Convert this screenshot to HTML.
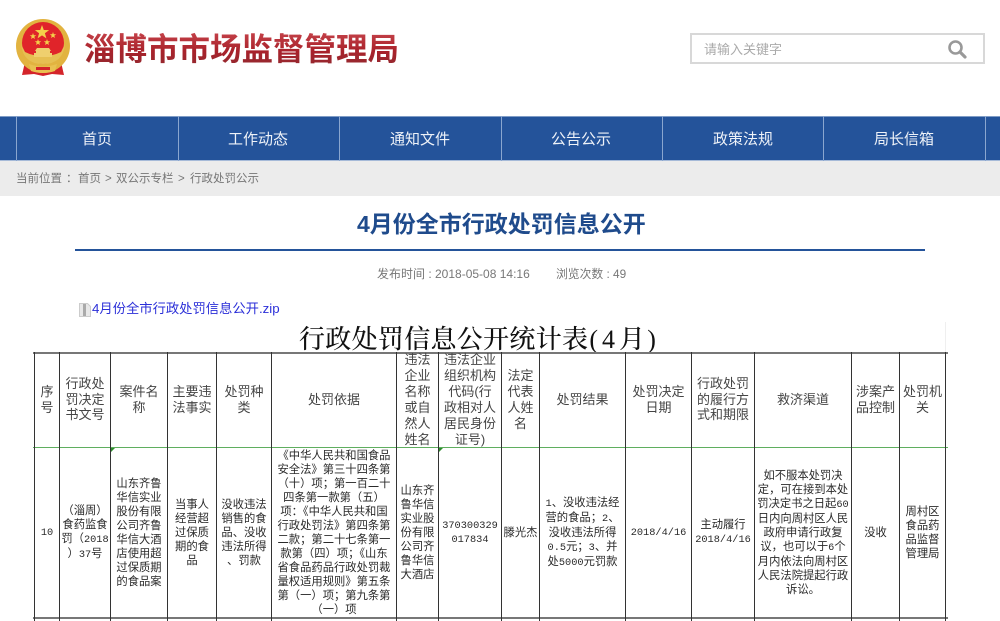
<!DOCTYPE html>
<html lang="zh-CN">
<head>
<meta charset="utf-8">
<title>4月份全市行政处罚信息公开</title>
<style>
html,body{margin:0;padding:0;background:#fff}
body{width:1000px;height:621px;position:relative;overflow:hidden;font-family:"Liberation Sans","Noto Sans CJK SC",sans-serif}
#w{position:absolute;left:0;top:0;width:1000px;height:621px;filter:blur(.3px)}
.a{position:absolute;white-space:nowrap}
.logo{left:84px;top:29px;font-size:31.5px;line-height:40px;font-weight:700;color:#a52a32;background:linear-gradient(#c9474e,#a9222b 55%,#8f2a30);-webkit-background-clip:text;background-clip:text;-webkit-text-fill-color:transparent}
.nav{left:0;top:116px;width:1000px;height:45px;background:#24539a;box-sizing:border-box;border-top:1px solid #7f9cc6;border-bottom:1px solid #a6bad8}
.sep{position:absolute;top:116px;width:1px;height:45px;background:#8aa6cf}
.nt{position:absolute;top:129px;width:160px;text-align:center;color:#eef2f8;font-size:15px;line-height:22px}
.crumb{left:0;top:161px;width:1000px;height:35px;background:#ececec}
.h{position:absolute;background:#555;height:1px}
.v{position:absolute;background:#333;width:1px;top:352px;height:269px}
.c{position:absolute;display:flex;align-items:center;justify-content:center;text-align:center;white-space:nowrap;color:#333}
.th{top:352px;height:95px;font-size:13px;line-height:15.6px;color:#444}
.td{top:448px;height:169px;font-size:11.3px;line-height:14px;color:#2a2a2a}
.n{font-family:"Liberation Mono",monospace;font-size:10.3px}
.tri{position:absolute;top:448px;width:0;height:0;border-top:4px solid #2e8b2e;border-right:4px solid transparent}
.cr{position:absolute;top:171px;font-size:11.5px;line-height:16px;color:#777}
</style>
</head>
<body>
<div id="w">
<svg class="a" style="left:14px;top:17px" width="60" height="62" viewBox="14 17 60 62">
<path d="M25 62 L22 75 L34 74 L43 76 L52 74 L64 75 L61 62Z" fill="#d4242a"/>
<circle cx="43" cy="46" r="27" fill="#e2b340"/>
<circle cx="43" cy="43" r="21" fill="#e0242a"/>
<path d="M21 44 Q23 64 43 64 Q63 64 65 44 L61 52 Q53 56 43 56 Q33 56 25 52Z" fill="#e6bf52"/>
<path d="M42 25l1.8 5 5.3.1-4.2 3.2 1.5 5.1-4.4-3-4.4 3 1.5-5.1-4.2-3.2 5.3-.1z" fill="#f4d04a"/>
<path d="M33 33l.8 2.2 2.4.1-1.9 1.4.7 2.3-2-1.3-2 1.3.7-2.3-1.9-1.4 2.4-.1z" fill="#f4d04a"/>
<path d="M53 32l.8 2.2 2.4.1-1.9 1.4.7 2.3-2-1.3-2 1.3.7-2.3-1.9-1.4 2.4-.1z" fill="#f4d04a"/>
<path d="M38 39l.8 2.2 2.4.1-1.9 1.4.7 2.3-2-1.3-2 1.3.7-2.3-1.9-1.4 2.4-.1z" fill="#f4d04a"/>
<path d="M47 39l.8 2.2 2.4.1-1.9 1.4.7 2.3-2-1.3-2 1.3.7-2.3-1.9-1.4 2.4-.1z" fill="#f4d04a"/>
<path d="M37 48h12l2 3h-1v2h2v4H34v-4h2v-2h-1z" fill="#efcf6e"/>
<path d="M29 64q14 5 28 0l-2 7q-12 4-24 0z" fill="#e9c050"/>
<path d="M36 67h14v3H36z" fill="#d4242a"/>
</svg>
<div class="a logo">淄博市市场监督管理局</div>

<div class="a" style="left:690px;top:33px;width:295px;height:31px;box-sizing:border-box;border:2px solid #d8d8d8;background:#fff"></div>
<div class="a" style="left:704px;top:40px;font-size:13px;line-height:20px;color:#aaa">请输入关键字</div>
<svg class="a" style="left:947px;top:39px" width="20" height="20" viewBox="0 0 20 20"><circle cx="8.5" cy="8.5" r="6" fill="none" stroke="#999" stroke-width="2.6"/><path d="M13 13l5 5" stroke="#999" stroke-width="3.2" stroke-linecap="round"/></svg>

<div class="a nav"></div>
<div class="sep" style="left:16px"></div><div class="sep" style="left:178px"></div><div class="sep" style="left:339px"></div><div class="sep" style="left:501px"></div><div class="sep" style="left:662px"></div><div class="sep" style="left:823px"></div><div class="sep" style="left:985px"></div>
<div class="nt" style="left:17px">首页</div>
<div class="nt" style="left:178px">工作动态</div>
<div class="nt" style="left:340px">通知文件</div>
<div class="nt" style="left:501px">公告公示</div>
<div class="nt" style="left:663px">政策法规</div>
<div class="nt" style="left:824px">局长信箱</div>

<div class="a crumb"></div>
<div class="a cr" style="left:16px">当前位置</div>
<div class="a cr" style="left:66px">：</div>
<div class="a cr" style="left:78px">首页</div>
<div class="a cr" style="left:105px">&gt;</div>
<div class="a cr" style="left:116px">双公示专栏</div>
<div class="a cr" style="left:178px">&gt;</div>
<div class="a cr" style="left:190px">行政处罚公示</div>

<div class="a" style="left:357px;top:208px;font-size:23px;line-height:32px;font-weight:700;color:#1f4b8c">4月份全市行政处罚信息公开</div>
<div class="a" style="left:75px;top:249px;width:850px;height:2px;background:#24539a"></div>
<div class="a" style="left:377px;top:266px;font-size:12px;line-height:16px;color:#777">发布时间 : 2018-05-08 14:16</div>
<div class="a" style="left:556px;top:266px;font-size:11.8px;line-height:16px;color:#777">浏览次数 : 49</div>

<svg class="a" style="left:79px;top:303px" width="12" height="14" viewBox="0 0 12 14"><path d="M.5.5h8l3 3v10H.5z" fill="#e8e8e8" stroke="#ccc"/><path d="M4 1h3v12H4z" fill="#aaa"/></svg>
<div class="a" style="left:92px;top:300px;font-size:13.3px;line-height:18px;color:#2b2fd8">4月份全市行政处罚信息公开.zip</div>

<div class="a" style="left:299px;top:324px;font-family:'Liberation Serif','Noto Serif CJK SC',serif;font-size:26px;line-height:32px;color:#111;letter-spacing:.3px;font-weight:500">行政处罚信息公开统计表<span style="letter-spacing:4px;margin-left:1px">(4</span><span>月</span><span style="margin-left:2px">)</span></div>
<div class="a" style="left:945px;top:322px;width:1px;height:30px;background:#efefef"></div>

<div class="h" style="left:33px;top:352px;width:915px;height:2px;background:#777"></div>
<div class="h" style="left:33px;top:447px;width:915px;background:#5fae5f"></div>
<div class="h" style="left:33px;top:617px;width:915px;height:2px;background:#777"></div>

<div class="v" style="left:34px"></div><div class="v" style="left:59px"></div><div class="v" style="left:110px"></div><div class="v" style="left:167px"></div><div class="v" style="left:216px"></div><div class="v" style="left:271px"></div><div class="v" style="left:396px"></div><div class="v" style="left:438px"></div><div class="v" style="left:501px"></div><div class="v" style="left:539px"></div><div class="v" style="left:625px"></div><div class="v" style="left:691px"></div><div class="v" style="left:754px"></div><div class="v" style="left:851px"></div><div class="v" style="left:899px"></div><div class="v" style="left:945px"></div>
<div class="tri" style="left:111px"></div><div class="tri" style="left:439px"></div>

<div class="c th" style="left:35px;width:24px"><span>序<br>号</span></div>
<div class="c th" style="left:60px;width:50px"><span>行政处<br>罚决定<br>书文号</span></div>
<div class="c th" style="left:111px;width:56px"><span>案件名<br>称</span></div>
<div class="c th" style="left:168px;width:48px"><span>主要违<br>法事实</span></div>
<div class="c th" style="left:217px;width:54px"><span>处罚种<br>类</span></div>
<div class="c th" style="left:272px;width:124px"><span>处罚依据</span></div>
<div class="c th" style="left:397px;width:41px;line-height:16px"><span>违法<br>企业<br>名称<br>或自<br>然人<br>姓名</span></div>
<div class="c th" style="left:439px;width:62px;line-height:16px"><span>违法企业<br>组织机构<br>代码(行<br>政相对人<br>居民身份<br>证号)</span></div>
<div class="c th" style="left:502px;width:37px;line-height:16px"><span>法定<br>代表<br>人姓<br>名</span></div>
<div class="c th" style="left:540px;width:85px"><span>处罚结果</span></div>
<div class="c th" style="left:626px;width:65px"><span>处罚决定<br>日期</span></div>
<div class="c th" style="left:692px;width:62px"><span>行政处罚<br>的履行方<br>式和期限</span></div>
<div class="c th" style="left:755px;width:96px"><span>救济渠道</span></div>
<div class="c th" style="left:852px;width:47px"><span>涉案产<br>品控制</span></div>
<div class="c th" style="left:900px;width:45px"><span>处罚机<br>关</span></div>

<div class="c td" style="left:35px;width:24px"><span class="n">10</span></div>
<div class="c td" style="left:60px;width:50px"><span>（淄周）<br>食药监食<br>罚（<span class="n">2018</span><br>）<span class="n">37</span>号</span></div>
<div class="c td" style="left:111px;width:56px"><span>山东齐鲁<br>华信实业<br>股份有限<br>公司齐鲁<br>华信大酒<br>店使用超<br>过保质期<br>的食品案</span></div>
<div class="c td" style="left:168px;width:48px"><span>当事人<br>经营超<br>过保质<br>期的食<br>品</span></div>
<div class="c td" style="left:217px;width:54px"><span>没收违法<br>销售的食<br>品、没收<br>违法所得<br>、罚款</span></div>
<div class="c td" style="left:272px;width:124px"><span>《中华人民共和国食品<br>安全法》第三十四条第<br>（十）项；第一百二十<br>四条第一款第（五）<br>项：《中华人民共和国<br>行政处罚法》第四条第<br>二款；第二十七条第一<br>款第（四）项；《山东<br>省食品药品行政处罚裁<br>量权适用规则》第五条<br>第（一）项；第九条第<br>（一）项</span></div>
<div class="c td" style="left:397px;width:41px"><span>山东齐<br>鲁华信<br>实业股<br>份有限<br>公司齐<br>鲁华信<br>大酒店</span></div>
<div class="c td" style="left:439px;width:62px"><span class="n">370300329<br>017834</span></div>
<div class="c td" style="left:502px;width:37px"><span>滕光杰</span></div>
<div class="c td" style="left:540px;width:85px"><span><span class="n">1</span>、没收违法经<br>营的食品；<span class="n">2</span>、<br>没收违法所得<br><span class="n">0.5</span>元；<span class="n">3</span>、并<br>处<span class="n">5000</span>元罚款</span></div>
<div class="c td" style="left:626px;width:65px"><span class="n">2018/4/16</span></div>
<div class="c td" style="left:692px;width:62px"><span>主动履行<br><span class="n">2018/4/16</span></span></div>
<div class="c td" style="left:755px;width:96px"><span>如不服本处罚决<br>定，可在接到本处<br>罚决定书之日起<span class="n">60</span><br>日内向周村区人民<br>政府申请行政复<br>议，也可以于<span class="n">6</span>个<br>月内依法向周村区<br>人民法院提起行政<br>诉讼。</span></div>
<div class="c td" style="left:852px;width:47px"><span>没收</span></div>
<div class="c td" style="left:900px;width:45px"><span>周村区<br>食品药<br>品监督<br>管理局</span></div>
</div>
</body>
</html>
